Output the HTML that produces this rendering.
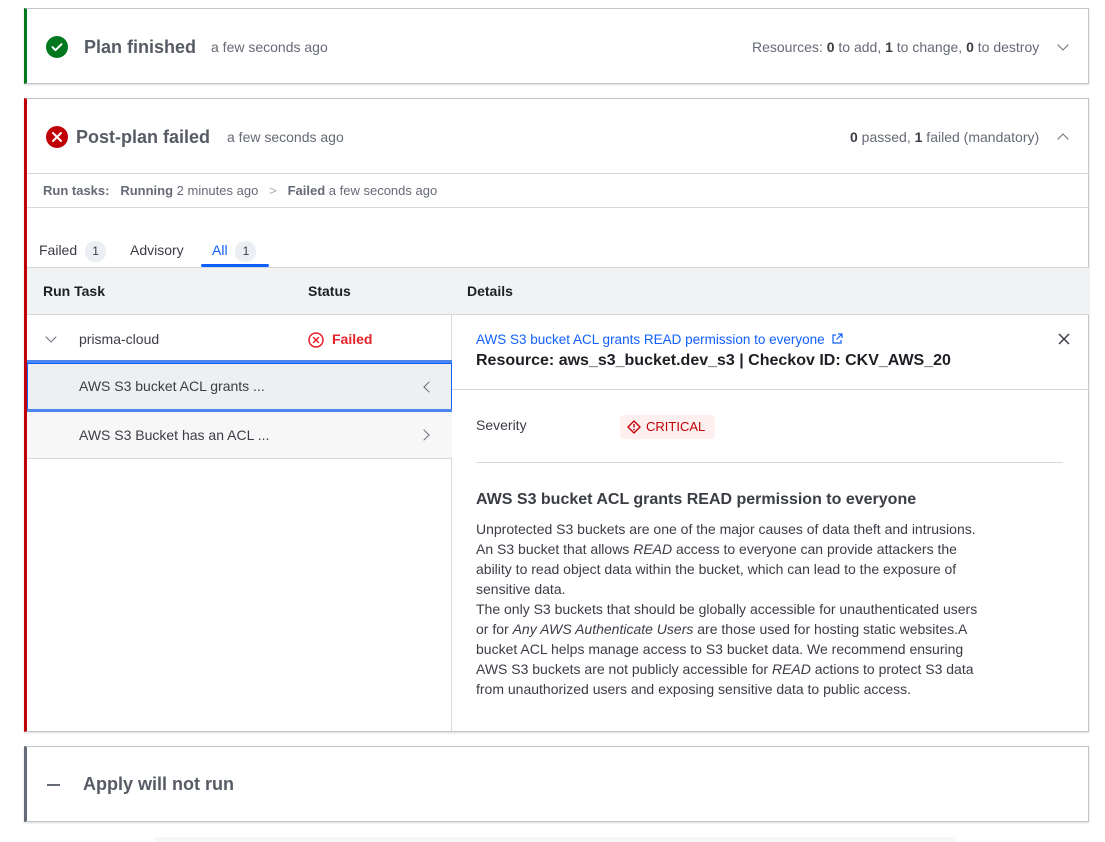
<!DOCTYPE html>
<html><head><meta charset="utf-8"><style>
*{box-sizing:border-box;margin:0;padding:0}
body{width:1105px;height:842px;background:#fff;font-family:"Liberation Sans",Arial,sans-serif;color:#3b3d45;position:relative;overflow:hidden}
.card{position:absolute;left:24px;width:1065px;background:#fff;border:1px solid #c2c5cb;box-shadow:0 1px 2px rgba(0,0,0,.15)}
.abs{position:absolute;white-space:nowrap}
.muted{color:#656a76}
.chev{position:absolute;width:8px;height:8px;border-right:1.5px solid #656a76;border-bottom:1.5px solid #656a76}
</style></head><body>

<div class="card" style="top:8px;height:76px;border-left:3px solid #00781e">
  <svg class="abs" style="left:19px;top:27px" width="22" height="22" viewBox="0 0 22 22"><circle cx="11" cy="11" r="11" fill="#00781e"/><path d="M6.5 11.2l3 3 6-6" stroke="#fff" stroke-width="2" fill="none" stroke-linecap="round" stroke-linejoin="round"/></svg>
  <div class="abs" style="left:57px;top:28px;font-size:18px;font-weight:bold;color:#575b65">Plan finished</div>
  <div class="abs muted" style="left:184px;top:30px;font-size:14px">a few seconds ago</div>
  <div class="abs muted" style="left:725px;top:30px;font-size:14px">Resources: <b style="color:#3b3d45">0</b> to add, <b style="color:#3b3d45">1</b> to change, <b style="color:#3b3d45">0</b> to destroy</div>
  <div class="chev" style="left:1032px;top:32px;transform:rotate(45deg)"></div>
</div>

<div class="card" style="top:98px;height:634px;border-left:3px solid #c00005">
  <svg class="abs" style="left:19px;top:27px" width="22" height="22" viewBox="0 0 22 22"><circle cx="11" cy="11" r="11" fill="#c00005"/><path d="M7 7l8 8M15 7l-8 8" stroke="#fff" stroke-width="2" stroke-linecap="round"/></svg>
  <div class="abs" style="left:49px;top:28px;font-size:18px;font-weight:bold;color:#575b65">Post-plan failed</div>
  <div class="abs muted" style="left:200px;top:30px;font-size:14px">a few seconds ago</div>
  <div class="abs muted" style="left:823px;top:30px;font-size:14px"><b style="color:#3b3d45">0</b> passed, <b style="color:#3b3d45">1</b> failed (mandatory)</div>
  <div class="chev" style="left:1032px;top:36px;transform:rotate(-135deg)"></div>
  <div class="abs" style="left:0;top:74px;width:1062px;border-top:1px solid #d6d8dc"></div>
  <div class="abs muted" style="left:16px;top:84px;font-size:13px"><b>Run tasks:</b> &nbsp;&nbsp;<b>Running</b> 2 minutes ago &nbsp;&nbsp;<span style="color:#aaa">&gt;</span>&nbsp;&nbsp; <b>Failed</b> a few seconds ago</div>
  <div class="abs" style="left:0;top:108px;width:1062px;border-top:1px solid #d6d8dc"></div>
  <div class="abs" style="left:12px;top:142px;font-size:14px;color:#3b3d45">Failed <span style="display:inline-block;background:#ebeef2;border-radius:10px;width:21px;height:21px;text-align:center;line-height:21px;font-size:12px;margin-left:4px">1</span></div>
  <div class="abs" style="left:103px;top:143px;font-size:14px">Advisory</div>
  <div class="abs" style="left:185px;top:142px;font-size:14px;color:#1060ff">All <span style="display:inline-block;background:#ebeef2;color:#3b3d45;border-radius:10px;width:21px;height:21px;text-align:center;line-height:21px;font-size:12px;margin-left:4px">1</span></div>
  <div class="abs" style="left:174px;top:165px;width:68px;height:3px;background:#1060ff;border-radius:2px"></div>
  <div class="abs" style="left:0;top:168px;width:1062px;height:48px;background:#f1f2f3;border-top:1px solid #d6d8dc;border-bottom:1px solid #d6d8dc"></div>
  <div class="abs" style="left:16px;top:184px;font-size:14px;font-weight:bold;color:#1d1f24">Run Task</div>
  <div class="abs" style="left:281px;top:184px;font-size:14px;font-weight:bold;color:#1d1f24">Status</div>
  <div class="abs" style="left:440px;top:184px;font-size:14px;font-weight:bold;color:#1d1f24">Details</div>
  <div class="abs" style="left:424px;top:216px;height:416px;border-left:1px solid #d6d8dc"></div>
  <div class="chev" style="left:20px;top:234px;transform:rotate(45deg)"></div>
  <div class="abs" style="left:52px;top:232px;font-size:14px">prisma-cloud</div>
  <svg class="abs" style="left:281px;top:233px" width="16" height="16" viewBox="0 0 16 16"><circle cx="8" cy="8" r="7" fill="none" stroke="#e52228" stroke-width="1.5"/><path d="M5.5 5.5l5 5M10.5 5.5l-5 5" stroke="#e52228" stroke-width="1.5" stroke-linecap="round"/></svg>
  <div class="abs" style="left:305px;top:232px;font-size:14px;font-weight:bold;color:#e52228">Failed</div>
  <div class="abs" style="left:0;top:261px;width:425px;height:3px;background:#4c86f0"></div>
  <div class="abs" style="left:0;top:264px;width:425px;height:47px;background:#eeeff1;border:1px solid #1060ff"></div>
  <div class="abs" style="left:52px;top:279px;font-size:14px">AWS S3 bucket ACL grants ...</div>
  <div class="chev" style="left:398px;top:284px;transform:rotate(135deg)"></div>
  <div class="abs" style="left:0;top:310px;width:425px;height:3px;background:#4c86f0"></div>
  <div class="abs" style="left:0;top:313px;width:425px;height:47px;background:#f7f7f8;border-bottom:1px solid #d6d8dc"></div>
  <div class="abs" style="left:52px;top:328px;font-size:14px">AWS S3 Bucket has an ACL ...</div>
  <div class="chev" style="left:393px;top:332px;transform:rotate(-45deg)"></div>

  <div class="abs" style="left:449px;top:233px;font-size:13.5px;color:#1060ff">AWS S3 bucket ACL grants READ permission to everyone
    <svg width="12" height="12" viewBox="0 0 12 12" style="vertical-align:-1px;margin-left:3px"><path d="M5 2H2v8h8V7M7 1h4v4M11 1L5.5 6.5" stroke="#1060ff" stroke-width="1.2" fill="none"/></svg></div>
  <div class="abs" style="left:449px;top:253px;font-size:16px;font-weight:bold;color:#1d1f24">Resource: aws_s3_bucket.dev_s3 | Checkov ID: CKV_AWS_20</div>
  <svg class="abs" style="left:1031px;top:234px" width="12" height="12" viewBox="0 0 12 12"><path d="M1 1l10 10M11 1L1 11" stroke="#3b3d45" stroke-width="1.5"/></svg>
  <div class="abs" style="left:425px;top:290px;width:637px;border-top:1px solid #d6d8dc"></div>
  <div class="abs" style="left:449px;top:318px;font-size:14px">Severity</div>
  <div class="abs" style="left:593px;top:316px;height:24px;width:95px;background:#fff0f0;border-radius:4px;font-size:13px;color:#c00005;line-height:24px;padding-left:26px">CRITICAL
    <svg class="abs" style="left:7px;top:5px" width="14" height="14" viewBox="0 0 14 14"><path d="M7 1l6 6-6 6-6-6z" fill="none" stroke="#c00005" stroke-width="1.4" stroke-linejoin="round"/><path d="M7 4v3.5" stroke="#c00005" stroke-width="1.4"/><circle cx="7" cy="9.6" r=".8" fill="#c00005"/></svg></div>
  <div class="abs" style="left:449px;top:363px;width:587px;border-top:1px solid #d6d8dc"></div>
  <div class="abs" style="left:449px;top:392px;font-size:16px;font-weight:bold;color:#3b3d45">AWS S3 bucket ACL grants READ permission to everyone</div>
  <div class="abs" style="left:449px;top:420px;font-size:14px;line-height:20px;color:#3b3d45">Unprotected S3 buckets are one of the major causes of data theft and intrusions.<br>An S3 bucket that allows <i>READ</i> access to everyone can provide attackers the<br>ability to read object data within the bucket, which can lead to the exposure of<br>sensitive data.<br>The only S3 buckets that should be globally accessible for unauthenticated users<br>or for <i>Any AWS Authenticate Users</i> are those used for hosting static websites.A<br>bucket ACL helps manage access to S3 bucket data. We recommend ensuring<br>AWS S3 buckets are not publicly accessible for <i>READ</i> actions to protect S3 data<br>from unauthorized users and exposing sensitive data to public access.</div>
</div>

<div class="card" style="top:746px;height:76px;border-left:3px solid #656a76">
  <div class="abs" style="left:20px;top:37px;width:13px;height:2px;background:#656a76"></div>
  <div class="abs" style="left:56px;top:27px;font-size:18px;font-weight:bold;color:#575b65">Apply will not run</div>
</div>
<div class="abs" style="left:155px;top:837px;width:800px;height:5px;background:#f7f7f8"></div>
</body></html>
